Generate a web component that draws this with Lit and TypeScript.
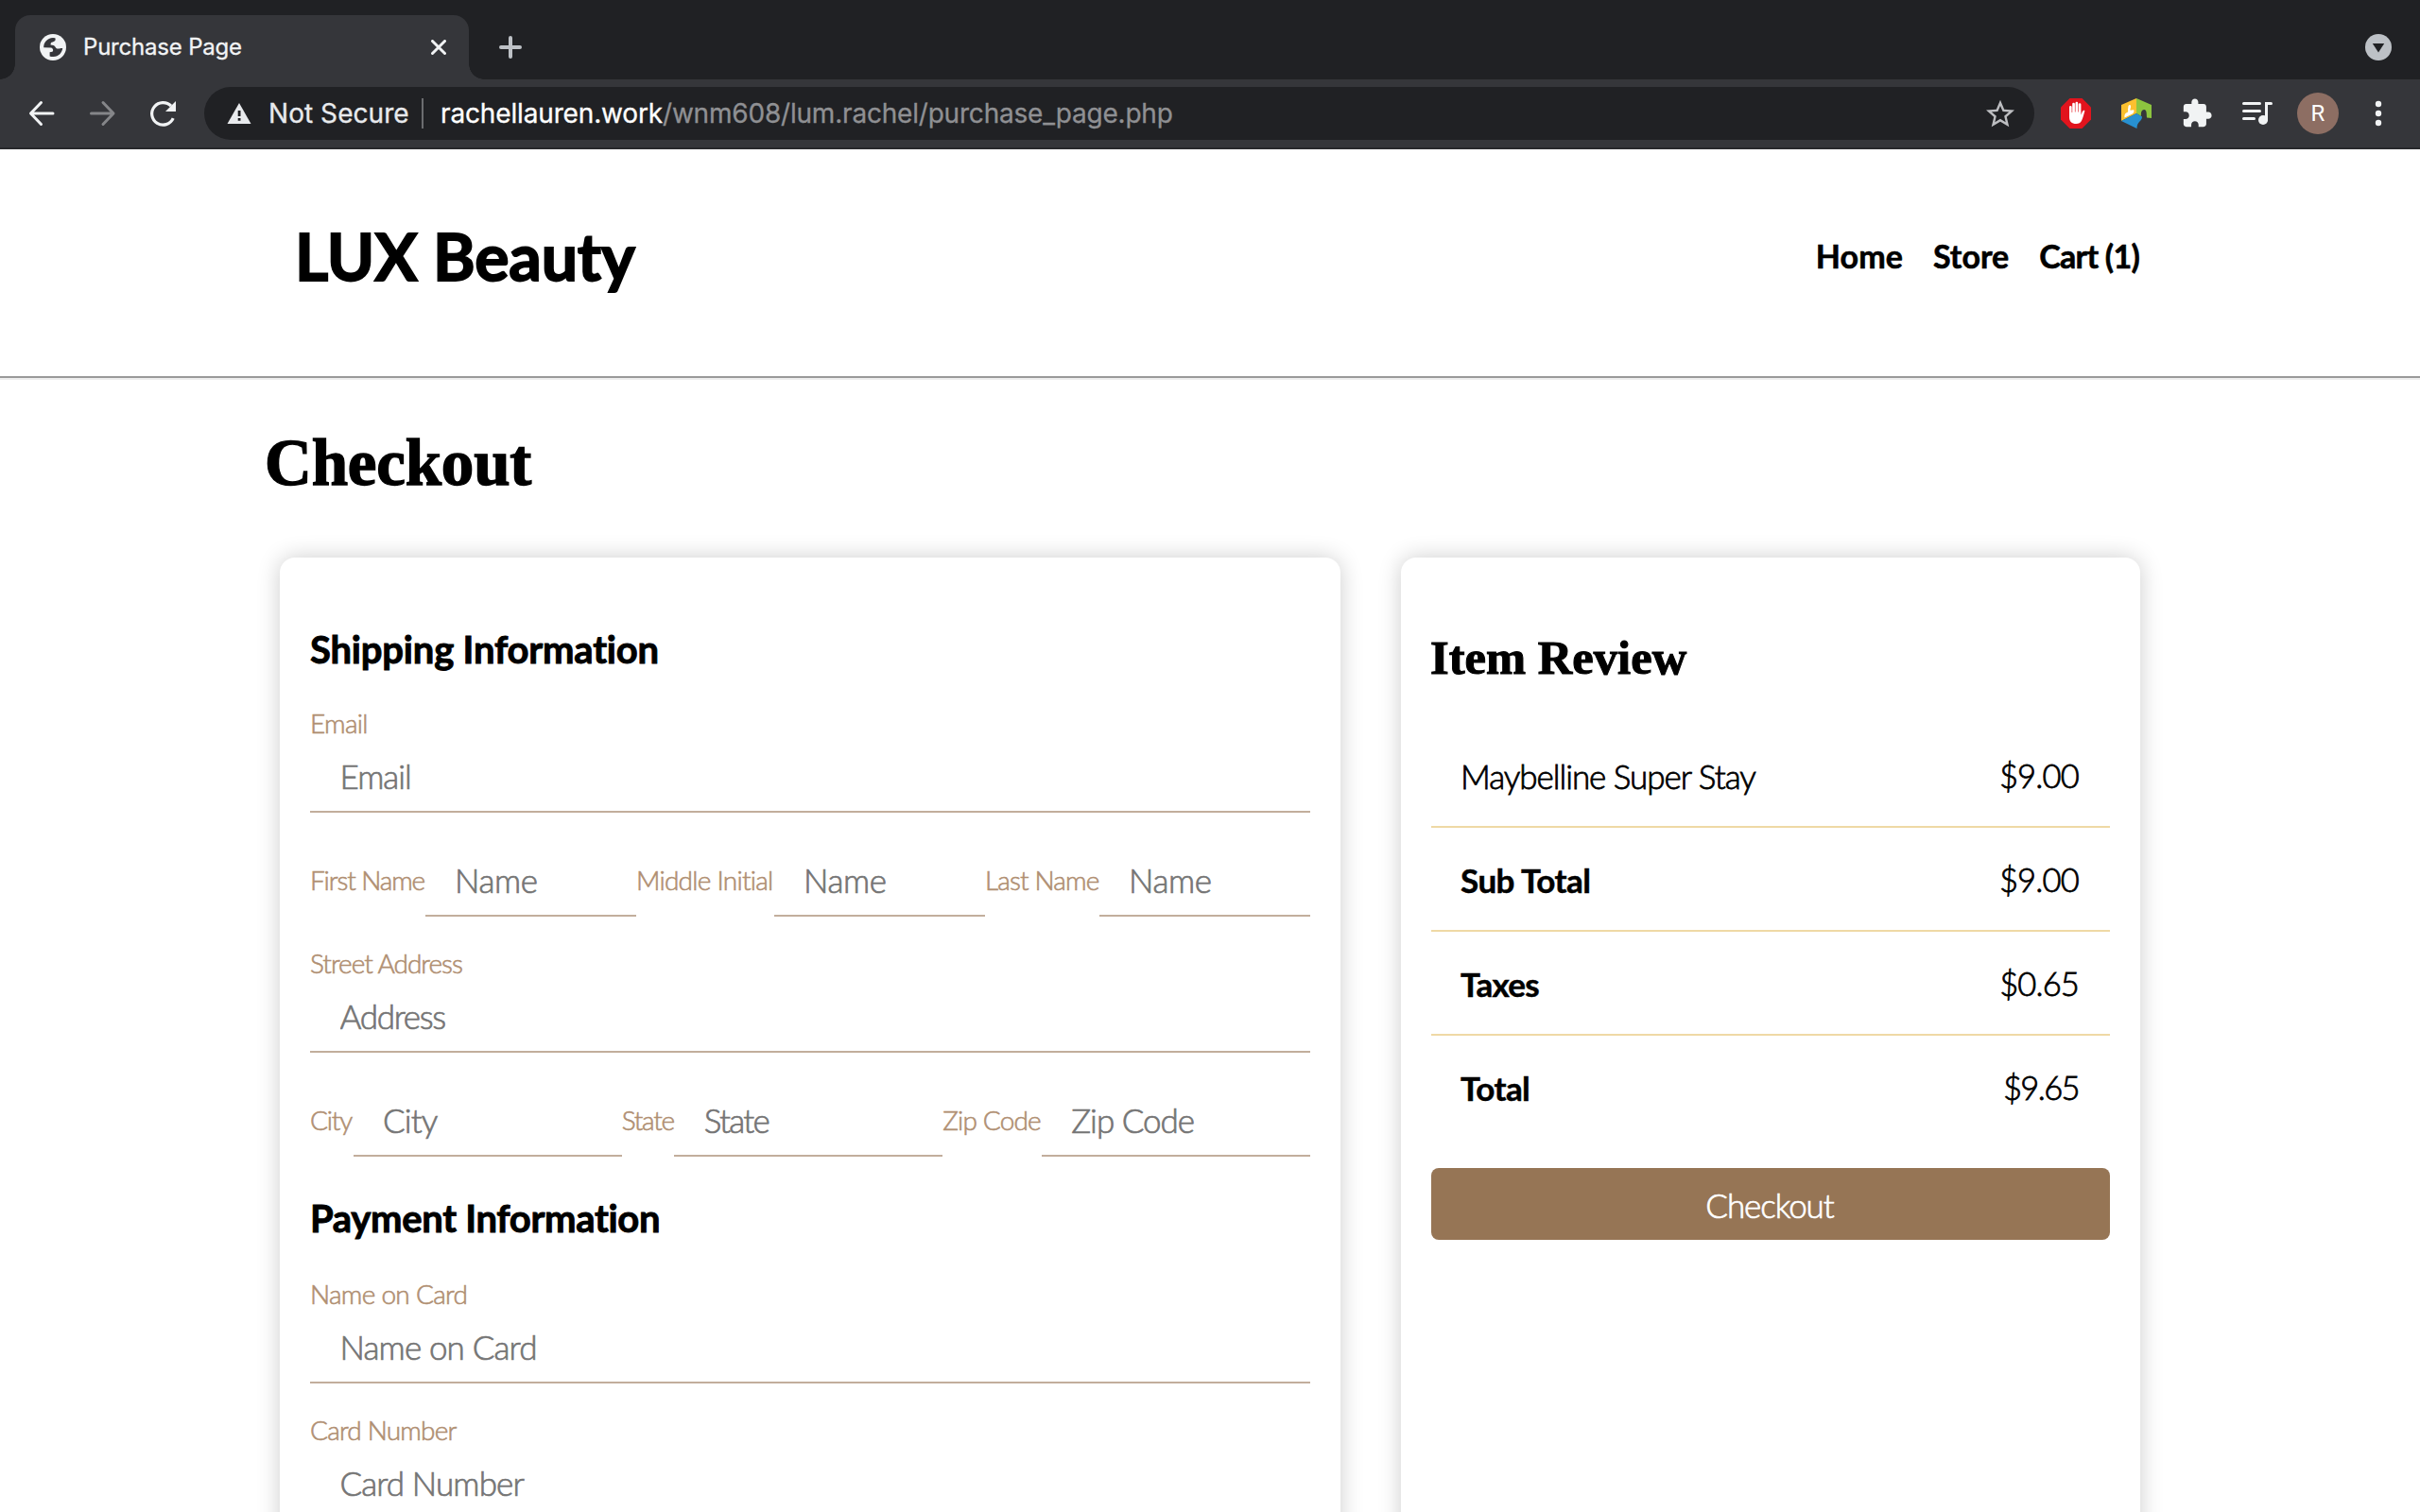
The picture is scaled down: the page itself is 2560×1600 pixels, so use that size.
import { LitElement, html, css, svg } from "lit";
import { customElement } from "lit/decorators.js";

/** A run of text with its own tracking, in pixels. */
interface Run {
  text: string;
  track: number;
}

interface Field {
  label: Run;
  hint: Run;
}

const run = (text: string, track: number): Run => ({ text, track });

const spaced = (r: Run) => html`<span style="letter-spacing:${r.track}px">${r.text}</span>`;

@customElement("browser-chrome")
class BrowserChrome extends LitElement {
  static styles = css`
    :host {
      display: block;
      font-family: Inter, Roboto, "Liberation Sans", sans-serif;
      color: #f1f3f4;
    }
    svg {
      display: block;
      flex: none;
    }
    .strip {
      display: flex;
      height: 84px;
      box-sizing: border-box;
      padding: 16px 30px 0 16px;
      background: #202124;
    }
    .tab {
      position: relative;
      display: flex;
      align-items: center;
      width: 480px;
      box-sizing: border-box;
      padding: 0 24px 0 26px;
      background: #35363a;
      border-radius: 16px 16px 0 0;
    }
    .tab::before,
    .tab::after {
      content: "";
      position: absolute;
      bottom: 0;
      width: 16px;
      height: 16px;
    }
    .tab::before {
      left: -16px;
      background: radial-gradient(circle at 0 0, transparent 15.5px, #35363a 16px);
    }
    .tab::after {
      right: -16px;
      background: radial-gradient(circle at 100% 0, transparent 15.5px, #35363a 16px);
    }
    .title {
      flex: 1;
      padding-left: 18px;
      font-size: 24px;
      line-height: 30px;
      margin-bottom: 1px;
      letter-spacing: -0.2px;
      -webkit-text-stroke: 0.3px #f1f3f4;
    }
    .strip-end {
      flex: 1;
      display: flex;
      align-items: center;
      justify-content: space-between;
      padding-left: 32px;
    }
    .bar {
      display: flex;
      align-items: center;
      height: 74px;
      box-sizing: border-box;
      padding: 0 12px 0 28px;
      background: #35363a;
      border-bottom: 2px solid #28292c;
    }
    .travel {
      display: flex;
      gap: 32px;
      margin-right: 28px;
    }
    .omnibox {
      flex: 1;
      display: flex;
      align-items: center;
      height: 56px;
      margin-right: 12px;
      padding: 0 18px 0 24px;
      box-sizing: border-box;
      border-radius: 28px;
      background: #202124;
      font-size: 28px;
      line-height: 34px;
    }
    .secure {
      padding-left: 18px;
      width: 162px;
      color: #e8eaed;
      letter-spacing: 0.05px;
      -webkit-text-stroke: 0.3px #e8eaed;
      white-space: nowrap;
    }
    .rule {
      width: 2px;
      height: 32px;
      background: #6b6c6f;
      margin-right: 18px;
    }
    .url {
      flex: 1;
      color: #8f9093;
      letter-spacing: -0.2px;
      -webkit-text-stroke: 0.3px #8f9093;
      white-space: nowrap;
    }
    .host {
      color: #fff;
      letter-spacing: -0.15px;
      -webkit-text-stroke: 0.3px #fff;
    }
    .tool {
      width: 64px;
      display: flex;
      justify-content: center;
    }
    .avatar {
      width: 44px;
      height: 44px;
      border-radius: 50%;
      background: #8d6e63;
      color: #fff;
      font: 400 24px/45px Roboto, sans-serif;
      text-align: center;
    }
  `;

  render() {
    return html`
      <div class="strip">
        <div class="tab">
          <svg width="28" height="28" viewBox="0 0 28 28">
            <circle cx="14" cy="14" r="14" fill="#f1f3f4" />
            <path
              fill="#35363a"
              d="M4.2 14.2C4.2 8.600 8 4.200 14 3.900l2.400.4c.8 2.200-.2 3.700-2.600 4.100-2 .3-2.400 1.400-2.200 3.200l3 .3c2 .4 2 3 3.600 3.500 2.200.7 3.800-.7 6-.5-.5 4.600-4 8.700-9.600 9.100-1.500.1-3-.2-4-.6v-4.200l2.800-.4c1.500-1.300.7-3.900-1.400-4.400z"
            />
          </svg>
          <div class="title">Purchase Page</div>
          <svg width="16" height="16" viewBox="0 0 16 16" fill="none" stroke="#f1f3f4" stroke-width="3" stroke-linecap="round">
            <path d="M1.500 1.500l13 13M14.500 1.500l-13 13" />
          </svg>
        </div>
        <div class="strip-end">
          <svg width="24" height="24" viewBox="0 0 24 24" fill="none" stroke="#bdc1c6" stroke-width="4" stroke-linecap="round">
            <path d="M12 2v20M2 12h20" />
          </svg>
          <svg width="28" height="28" viewBox="0 0 28 28">
            <circle cx="14" cy="14" r="14" fill="#bdc1c6" />
            <path d="M7.800 10h12.400L14 19.500z" fill="#202124" />
          </svg>
        </div>
      </div>
      <div class="bar">
        <div class="travel">
          <svg width="32" height="32" viewBox="0 0 32 32" fill="none" stroke="#f1f3f4" stroke-width="3" stroke-linecap="round" stroke-linejoin="round">
            <path d="M28 16H5M15.500 4.500L4.500 16l11 11.500" />
          </svg>
          <svg width="32" height="32" viewBox="0 0 32 32" fill="none" stroke="#858689" stroke-width="3" stroke-linecap="round" stroke-linejoin="round">
            <path d="M4.500 16H27.500M17 4.500L28 16 17 27.500" />
          </svg>
          <svg width="32" height="32" viewBox="0 0 32 32">
            <path d="M27.200 21.200A11.800 11.800 0 1 1 25 8.200" fill="none" stroke="#f1f3f4" stroke-width="3.200" />
            <path d="M30 3v11H19z" fill="#f1f3f4" />
          </svg>
        </div>
        <div class="omnibox">
          <svg width="26" height="22" viewBox="0 0 26 22">
            <path d="M13 0l12.500 22H.5z" fill="#e8eaed" />
            <path d="M11.700 8h2.800v6h-2.800zM11.700 16h2.800v2.800h-2.800z" fill="#202124" />
          </svg>
          <div class="secure">Not Secure</div>
          <div class="rule"></div>
          <div class="url"><span class="host">rachellauren.work</span>/wnm608/lum.rachel/purchase_page.php</div>
          <svg width="36" height="36" viewBox="0 0 24 24" fill="#bdbec1">
            <path
              d="M22 9.740l-7.190-.62L12 2.500 9.190 9.130 2 9.740l5.460 4.730-1.640 7.030L12 17.770l6.180 3.730-1.630-7.030L22 9.740zM12 15.900l-3.760 2.270 1-4.280-3.320-2.880 4.380-.38L12 6.600l1.710 4.040 4.380.38-3.320 2.880 1 4.280L12 15.900z"
            />
          </svg>
        </div>
        <div class="tool">
          <svg width="32" height="32" viewBox="0 0 32 32">
            <path d="M9.500 0h13L32 9.500v13L22.500 32h-13L0 22.500v-13z" fill="#e1141d" />
            <path
              fill="#fff"
              d="M9 9.200a1.300 1.300 0 0 1 2.600 0V15h.6V6a1.350 1.350 0 0 1 2.700 0v8.500h.6V5.200a1.350 1.350 0 0 1 2.700 0v9.300h.6V6.600a1.300 1.300 0 0 1 2.600 0v10.800c.9-1.400 1-3.300 2.200-4.200.8-.6 1.900-.4 1.700.5-1 3.200-1.700 6.800-3.300 10-1.200 2.300-3 3.300-5.700 3.300-4.600 0-7.300-2.600-7.300-7z"
            />
          </svg>
        </div>
        <div class="tool">
          <svg width="32" height="32" viewBox="0 0 32 32">
            <path d="M16 0v16L0 24V7z" fill="#fbc02f" />
            <path d="M16 0l16 7v14l-5-.5c-.3-4 .2-8-2.700-8.500-3.500 0-3.500 4-3.300 7L16 16z" fill="#8dc53f" />
            <path d="M16 16l6 3.500c0 5-5.500 5-5.500 12.500L0 24z" fill="#2790d0" />
            <path d="M7.500 8c1.500-1.800 3-.8 2.500 1.500-.2 1.400-1 2.200-.4 3.200l3.600-.4c.8 2-.3 3.200-1.500 4.200L3.500 20.500c-.5-2 .3-4.300 1.700-5 2-.8 2.300-1.500 1.800-3.500z" fill="#fff" />
          </svg>
        </div>
        <div class="tool">
          <svg width="34" height="34" viewBox="0 0 24 24" fill="#f1f3f4">
            <path
              d="M20.500 11H19V7c0-1.100-.9-2-2-2h-4V3.500C13 2.120 11.880 1 10.500 1S8 2.120 8 3.500V5H4c-1.100 0-1.990.9-1.990 2v3.800H3.500c1.490 0 2.700 1.210 2.700 2.700s-1.210 2.700-2.700 2.700H2V20c0 1.100.9 2 2 2h3.800v-1.500c0-1.490 1.210-2.700 2.700-2.700 1.490 0 2.700 1.210 2.700 2.700V22H17c1.100 0 2-.9 2-2v-4h1.500c1.380 0 2.500-1.120 2.500-2.500S21.880 11 20.500 11z"
            />
          </svg>
        </div>
        <div class="tool">
          <svg width="32" height="32" viewBox="0 0 32 32" fill="none" stroke="#f1f3f4" stroke-width="3" stroke-linecap="round">
            <path d="M1.500 5.500h17M1.500 13.500h17M1.500 21.500h11M25.500 23V5.500h5" />
            <circle cx="22" cy="23" r="5" fill="#f1f3f4" stroke="none" />
          </svg>
        </div>
        <div class="tool"><div class="avatar">R</div></div>
        <div class="tool">
          <svg width="8" height="32" viewBox="0 0 8 32" fill="#f1f3f4">
            ${[6, 16, 26].map((y) => svg`<circle cx="4" cy=${y} r="3.200" />`)}
          </svg>
        </div>
      </div>
    `;
  }
}

@customElement("shipping-form")
class ShippingForm extends LitElement {
  static styles = css`
    :host {
      display: block;
    }
    .heading {
      margin: 73px 0 36px;
      font-size: 40px;
      line-height: 49px;
      font-weight: 700;
      -webkit-text-stroke: 0.9px #000;
      white-space: nowrap;
    }
    .heading.second {
      margin: 41px 0 38px;
    }
    .label {
      display: block;
      height: 34px;
      font-size: 28px;
      line-height: 34px;
      font-weight: 300;
      color: #b08f72;
      -webkit-text-stroke: 0.6px #b08f72;
      white-space: nowrap;
    }
    .input {
      display: block;
      width: 100%;
      min-width: 0;
      height: 78px;
      box-sizing: border-box;
      margin: 0;
      padding: 2px 32px 0 31.5px;
      border: 0;
      border-bottom: 2px solid #c2ae9c;
      border-radius: 0;
      background: none;
      font: inherit;
      font-size: 35px;
      font-weight: 300;
    }
    .input::placeholder {
      color: #757575;
      -webkit-text-stroke: 0.7px #757575;
      opacity: 1;
    }
    .field {
      margin-bottom: 32px;
    }
    .trio {
      display: grid;
      align-items: center;
      margin-bottom: 32px;
    }
    .names {
      grid-template-columns: 121.5px 1fr 145.5px 1fr 120.5px 1fr;
    }
    .places {
      grid-template-columns: 45.5px 1fr 55.5px 1fr 104.5px 1fr;
    }
  `;

  private names: Field[] = [
    { label: run("First Name", -1.1), hint: run("Name", -0.4) },
    { label: run("Middle Initial", -0.75), hint: run("Name", -0.4) },
    { label: run("Last Name", -0.85), hint: run("Name", -0.4) },
  ];

  private places: Field[] = [
    { label: run("City", -1.2), hint: run("City", -0.9) },
    { label: run("State", -1.25), hint: run("State", -1.7) },
    { label: run("Zip Code", -0.85), hint: run("Zip Code", -1) },
  ];

  private pair(f: Field) {
    return html`
      <label class="label">${spaced(f.label)}</label>
      <input class="input" placeholder=${f.hint.text} style="letter-spacing:${f.hint.track}px" />
    `;
  }

  private field(label: Run, hint: Run) {
    return html`<div class="field">${this.pair({ label, hint })}</div>`;
  }

  render() {
    return html`
      <h3 class="heading">${spaced(run("Shipping Information", -0.2))}</h3>
      ${this.field(run("Email", -0.7), run("Email", -1.05))}
      <div class="trio names">${this.names.map((f) => this.pair(f))}</div>
      ${this.field(run("Street Address", -1), run("Address", -1.3))}
      <div class="trio places">${this.places.map((f) => this.pair(f))}</div>
      <h3 class="heading second">${spaced(run("Payment Information", -0.32))}</h3>
      ${this.field(run("Name on Card", -0.7), run("Name on Card", -0.85))}
      ${this.field(run("Card Number", -0.8), run("Card Number", -0.9))}
    `;
  }
}

@customElement("item-review")
class ItemReview extends LitElement {
  static styles = css`
    :host {
      display: block;
    }
    .heading {
      margin: 76px 0 40px -1px;
      font: 700 50.5px/60px "Liberation Serif", serif;
      letter-spacing: 0.05px;
      -webkit-text-stroke: 1.1px #000;
    }
    .line {
      display: flex;
      justify-content: space-between;
      align-items: center;
      height: 110px;
      box-sizing: border-box;
      padding: 1px 33px 0 31px;
      border-bottom: 2px solid #efd9a5;
      font-size: 35px;
      line-height: 42px;
      font-weight: 300;
    }
    .line:last-of-type {
      border-bottom-color: transparent;
    }
    .thin {
      -webkit-text-stroke: 0.8px #000;
    }
    .price {
      font-size: 34.5px;
      -webkit-text-stroke: 0.8px #000;
    }
    .strong {
      font-weight: 700;
      -webkit-text-stroke: 0.5px #000;
    }
    .pay {
      display: block;
      width: 100%;
      height: 76px;
      margin-top: 30px;
      padding: 1px 2px 0 0;
      border: 0;
      border-radius: 8px;
      background: #967555;
      color: #fff;
      font: inherit;
      font-size: 35px;
      line-height: 42px;
      font-weight: 300;
      -webkit-text-stroke: 0.7px #fff;
    }
  `;

  private lines: { name: Run; price: Run; strong: boolean }[] = [
    { name: run("Maybelline Super Stay", -1.03), price: run("$9.00", -0.8), strong: false },
    { name: run("Sub Total", -0.5), price: run("$9.00", -0.8), strong: true },
    { name: run("Taxes", -0.7), price: run("$0.65", -0.85), strong: true },
    { name: run("Total", -0.55), price: run("$9.65", -1.6), strong: true },
  ];

  render() {
    return html`
      <h2 class="heading">Item Review</h2>
      ${this.lines.map(
        (l) => html`
          <div class="line">
            <div class=${l.strong ? "strong" : "thin"}>${spaced(l.name)}</div>
            <div class="price">${spaced(l.price)}</div>
          </div>
        `
      )}
      <button class="pay">${spaced(run("Checkout", -1.07))}</button>
    `;
  }
}

@customElement("app-root")
class AppRoot extends LitElement {
  static styles = css`
    :host {
      display: flex;
      flex-direction: column;
      height: 1600px;
      overflow: hidden;
      background: #fff;
      color: #000;
      font-family: Lato, "Open Sans", sans-serif;
    }
    .header {
      display: flex;
      justify-content: space-between;
      align-items: center;
      flex: none;
      height: 240px;
      box-sizing: border-box;
      padding: 0 297px 14px 312px;
      font-weight: 700;
    }
    .brand {
      font-size: 68px;
      line-height: 82px;
      letter-spacing: -0.15px;
      -webkit-text-stroke: 1.800px #000;
    }
    .nav {
      display: flex;
      gap: 32px;
      font-size: 34px;
      line-height: 42px;
      -webkit-text-stroke: 0.6px #000;
    }
    .divider {
      flex: none;
      height: 2px;
      background: #9a9a9a;
      border-bottom: 2px solid #eee;
    }
    .title {
      flex: none;
      margin: 38px 0 50px 280px;
      font: 700 69px/100px "Liberation Serif", serif;
      letter-spacing: -0.2px;
      -webkit-text-stroke: 1.400px #000;
    }
    .columns {
      flex: 1;
      min-height: 0;
      display: grid;
      grid-template-columns: 1122px 782px;
      grid-template-rows: 1200px;
      gap: 64px;
      padding-left: 296px;
    }
    .card {
      display: flow-root;
      padding: 0 32px;
      border-radius: 16px;
      box-shadow: 0 0 24px rgba(0, 0, 0, 0.2);
    }
  `;

  render() {
    return html`
      <browser-chrome></browser-chrome>
      <header class="header">
        <div class="brand">LUX Beauty</div>
        <nav class="nav">
          ${[run("Home", 0.1), run("Store", 0), run("Cart (1)", -0.75)].map(spaced)}
        </nav>
      </header>
      <div class="divider"></div>
      <h1 class="title">Checkout</h1>
      <main class="columns">
        <shipping-form class="card"></shipping-form>
        <item-review class="card"></item-review>
      </main>
    `;
  }
}
